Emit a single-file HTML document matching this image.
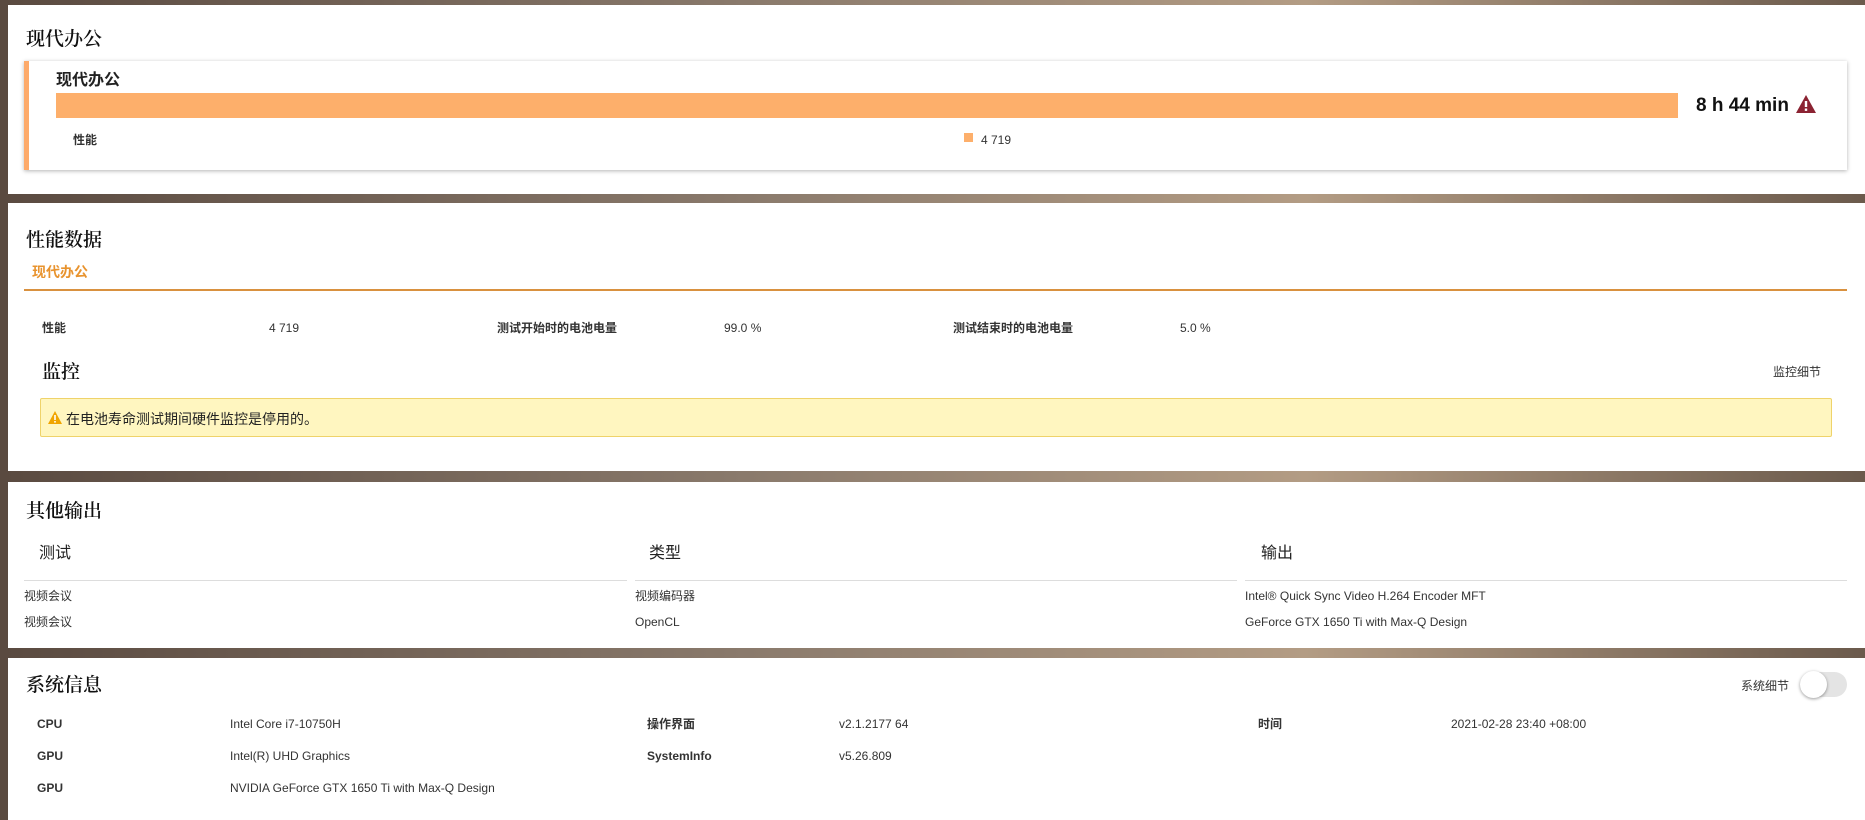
<!DOCTYPE html>
<html><head><meta charset="utf-8"><style>
*{margin:0;padding:0;box-sizing:border-box}
body{width:1865px;height:820px;overflow:hidden;position:relative;font-family:"Liberation Sans","Noto Sans CJK SC",sans-serif;color:#222;background:linear-gradient(90deg,#5a4a40 0%,#8a7a6c 40%,#b39c84 70%,#6b5a4c 100%)}
.p{position:absolute;left:8px;right:0;background:#fff}
.a{position:absolute;white-space:nowrap}
.h{font-size:19px;font-family:"Noto Serif CJK SC","Liberation Serif",serif;color:#111;font-weight:600}
.s{font-size:12px;color:#333}
.l{margin-top:2px}
.b{font-weight:bold}
</style></head><body>
<div class="p" style="top:5px;height:189px"></div>
<div class="p" style="top:203px;height:268px"></div>
<div class="p" style="top:482px;height:166px"></div>
<div class="p" style="top:658px;height:162px"></div>

<div class="a h" style="left:26px;top:24px">现代办公</div>
<div class="a" style="left:24px;top:61px;width:1823px;height:109px;background:#fff;border-left:5px solid #fdaa6a;box-shadow:0 1px 4px rgba(0,0,0,.3)"></div>
<div class="a b" style="left:56px;top:66px;font-size:16px">现代办公</div>
<div class="a" style="left:56px;top:93px;width:1622px;height:25px;background:#fdaf6b"></div>
<div class="a b" style="left:1696px;top:95px;font-size:19px;color:#111">8 h 44 min</div>
<svg class="a" style="left:1796px;top:95px" width="20" height="18" viewBox="0 0 20 18"><path d="M10 0L20 18H0Z" fill="#8b2332"/><rect x="8.8" y="6" width="2.4" height="6" fill="#fff"/><rect x="8.8" y="13.5" width="2.4" height="2.4" fill="#fff"/></svg>
<div class="a s b" style="left:73px;top:131px">性能</div>
<div class="a" style="left:964px;top:133px;width:9px;height:9px;background:#fdaf6b"></div>
<div class="a s l" style="left:981px;top:131px">4 719</div>

<div class="a h" style="left:26px;top:225px">性能数据</div>
<div class="a b" style="left:32px;top:262px;font-size:14px;color:#e8932e">现代办公</div>
<div class="a" style="left:24px;top:289px;width:1823px;height:2px;background:#d9913f"></div>
<div class="a s b" style="left:42px;top:319px">性能</div>
<div class="a s l" style="left:269px;top:319px">4 719</div>
<div class="a s b" style="left:497px;top:319px">测试开始时的电池电量</div>
<div class="a s l" style="left:724px;top:319px">99.0 %</div>
<div class="a s b" style="left:953px;top:319px">测试结束时的电池电量</div>
<div class="a s l" style="left:1180px;top:319px">5.0 %</div>
<div class="a h" style="left:42px;top:357px">监控</div>
<div class="a s" style="left:1773px;top:363px">监控细节</div>
<div class="a" style="left:40px;top:398px;width:1792px;height:39px;background:#fff6c0;border:1px solid #efd36a;border-radius:2px"></div>
<svg class="a" style="left:48px;top:411px" width="14" height="13" viewBox="0 0 14 13"><path d="M7 0L14 13H0Z" fill="#f0a500"/><rect x="6.2" y="4" width="1.6" height="5" fill="#fff"/><rect x="6.2" y="10" width="1.6" height="1.6" fill="#fff"/></svg>
<div class="a" style="left:66px;top:409px;font-size:14px;color:#222">在电池寿命测试期间硬件监控是停用的。</div>

<div class="a h" style="left:26px;top:496px">其他输出</div>
<div class="a" style="left:39px;top:539px;font-size:16px">测试</div>
<div class="a" style="left:649px;top:539px;font-size:16px">类型</div>
<div class="a" style="left:1261px;top:539px;font-size:16px">输出</div>
<div class="a" style="left:24px;top:580px;width:603px;height:1px;background:#ddd"></div>
<div class="a" style="left:635px;top:580px;width:602px;height:1px;background:#ddd"></div>
<div class="a" style="left:1245px;top:580px;width:602px;height:1px;background:#ddd"></div>
<div class="a s" style="left:24px;top:587px">视频会议</div>
<div class="a s" style="left:635px;top:587px">视频编码器</div>
<div class="a s l" style="left:1245px;top:587px">Intel® Quick Sync Video H.264 Encoder MFT</div>
<div class="a s" style="left:24px;top:613px">视频会议</div>
<div class="a s l" style="left:635px;top:613px">OpenCL</div>
<div class="a s l" style="left:1245px;top:613px">GeForce GTX 1650 Ti with Max-Q Design</div>

<div class="a h" style="left:26px;top:670px">系统信息</div>
<div class="a s" style="left:1741px;top:677px">系统细节</div>
<div class="a" style="left:1800px;top:672px;width:47px;height:25px;border-radius:13px;background:#e4e4e4"></div>
<div class="a" style="left:1800px;top:671px;width:27px;height:27px;border-radius:50%;background:#fff;box-shadow:0 1px 3px rgba(0,0,0,.4)"></div>
<div class="a s b l" style="left:37px;top:715px">CPU</div>
<div class="a s l" style="left:230px;top:715px">Intel Core i7-10750H</div>
<div class="a s b" style="left:647px;top:715px">操作界面</div>
<div class="a s l" style="left:839px;top:715px">v2.1.2177 64</div>
<div class="a s b" style="left:1258px;top:715px">时间</div>
<div class="a s l" style="left:1451px;top:715px">2021-02-28 23:40 +08:00</div>
<div class="a s b l" style="left:37px;top:747px">GPU</div>
<div class="a s l" style="left:230px;top:747px">Intel(R) UHD Graphics</div>
<div class="a s b l" style="left:647px;top:747px">SystemInfo</div>
<div class="a s l" style="left:839px;top:747px">v5.26.809</div>
<div class="a s b l" style="left:37px;top:779px">GPU</div>
<div class="a s l" style="left:230px;top:779px">NVIDIA GeForce GTX 1650 Ti with Max-Q Design</div>
</body></html>
